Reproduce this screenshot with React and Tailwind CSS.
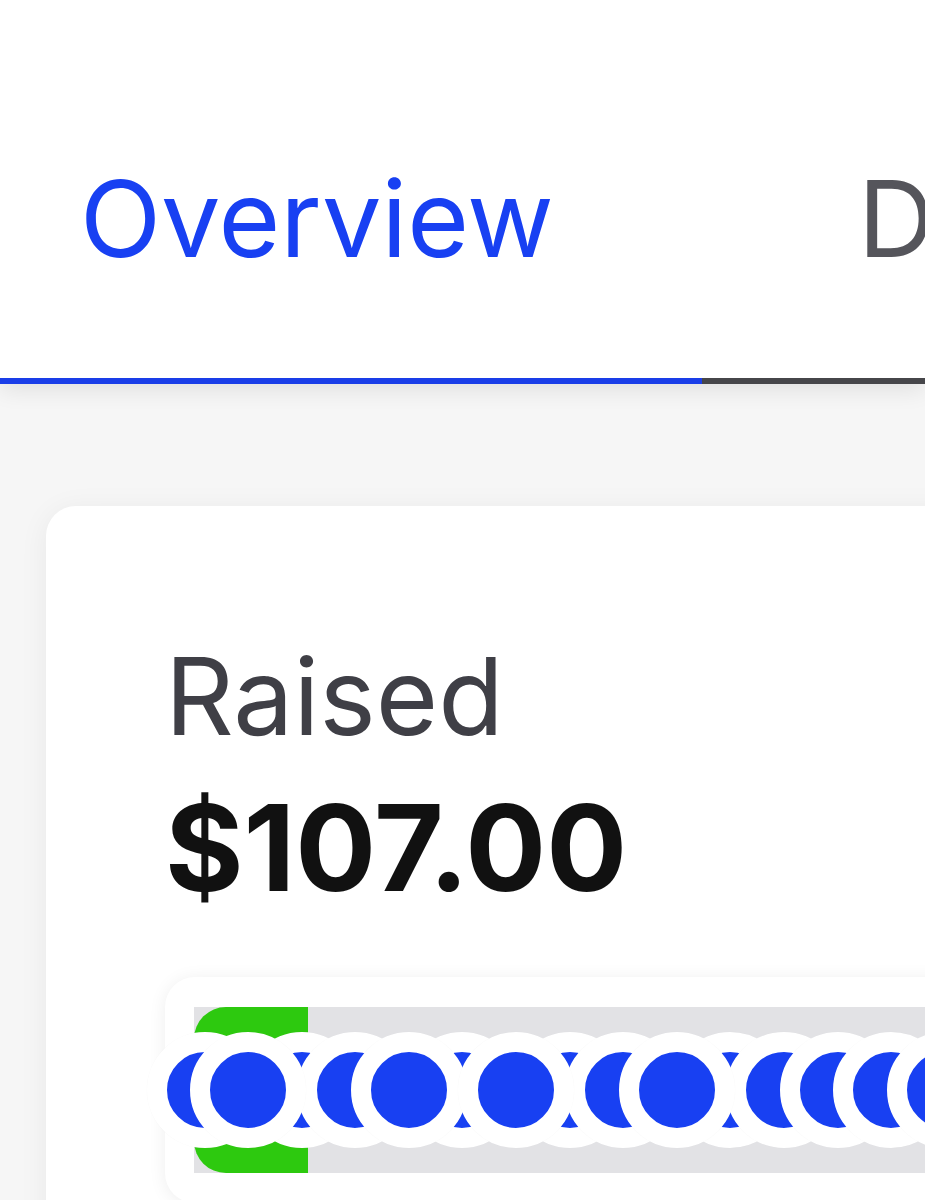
import React from 'react';

// donation markers along the progress bar (raised = on top)
const markers = [
  { id: 1, raised: false },
  { id: 2, raised: true },
  { id: 3, raised: false },
  { id: 4, raised: false },
  { id: 5, raised: true },
  { id: 6, raised: false },
  { id: 7, raised: true },
  { id: 8, raised: false },
  { id: 9, raised: false },
  { id: 10, raised: true },
  { id: 11, raised: false },
  { id: 12, raised: false },
  { id: 13, raised: false },
  { id: 14, raised: false },
  { id: 15, raised: false },
];

const Tabs = () => (
  <div className="relative z-10 flex bg-white shadow-[0_6px_22px_rgba(0,0,0,0.09)]">
    <div className="w-[702px] shrink-0 pl-[80px] pt-[166px] pb-[106px] border-b-[6px] border-[#1a3ee8]">
      <span className="block text-[106px] leading-none text-[#1840f2]">Overview</span>
    </div>
    <div className="flex-1 pl-[156px] pt-[166px] pb-[106px] border-b-[6px] border-[#46464a] whitespace-nowrap overflow-hidden">
      <span className="block text-[106px] leading-none text-[#55555b]">Donations</span>
    </div>
  </div>
);

const ProgressBar = () => (
  <div className="w-[1000px] bg-white rounded-[30px] p-[30px] pl-[29px] shadow-[0_2px_18px_rgba(0,0,0,0.07)]">
    <div className="relative h-[166px] bg-[#e2e2e5]">
      <div className="h-full w-[114px] bg-[#2dc90f] rounded-l-[32px]" />
      <div className="absolute inset-y-0 left-[-47px] flex items-center">
        {markers.map((m, i) => (
          <div
            key={m.id}
            className={
              'relative shrink-0 w-[116px] h-[116px] rounded-full bg-[#1840f2] border-[20.5px] border-white shadow-[0_0_1px_rgba(0,0,0,0.05)] ' +
              (i === 0 ? '' : i === 1 ? '-ml-[73px] ' : '-ml-[62.4px] ') +
              (m.raised ? 'z-10' : '')
            }
          />
        ))}
      </div>
    </div>
  </div>
);

export default function App() {
  return (
    <div className="w-[925px] h-[1200px] overflow-hidden bg-[#f6f6f6] font-['Inter',sans-serif]">
      <Tabs />
      <div className="pt-[122px] pl-[46px]">
        <div className="w-[1100px] bg-white rounded-[30px] pt-[137px] pl-[119px] pb-[60px] shadow-[0_4px_30px_rgba(0,0,0,0.06)]">
          <p className="text-[107px] leading-none text-[#3f3f46]">Raised</p>
          <p className="mt-[38px] text-[120px] leading-none font-bold text-[#111111]">$107.00</p>
          <div className="mt-[69px]">
            <ProgressBar />
          </div>
        </div>
      </div>
    </div>
  );
}
